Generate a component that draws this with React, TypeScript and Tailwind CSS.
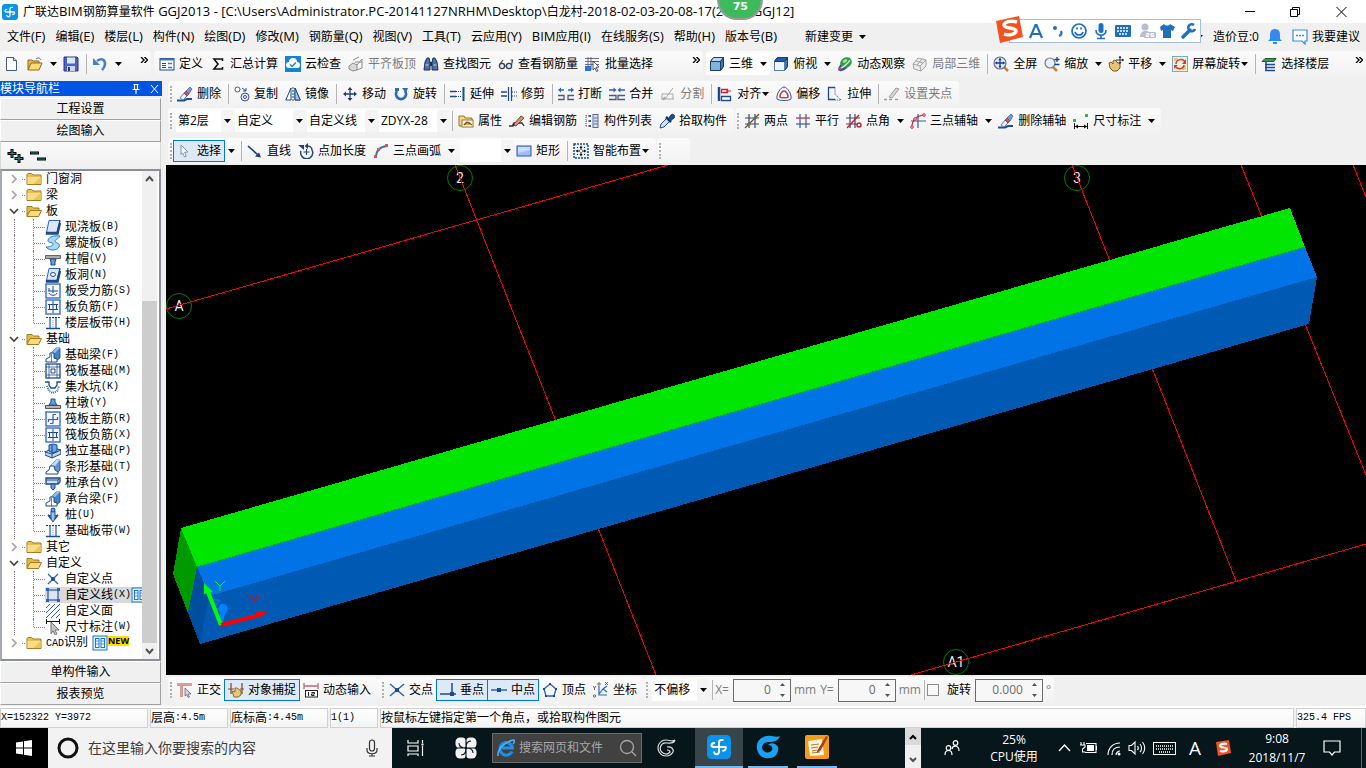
import type { ReactNode } from 'react'

const N = '#1c4a8a'
const B = '#2a62c4'
const R = '#c8202c'

const eraser = (
  <>
    <path d="M0 14.500h7l3-1.500h5" stroke="#1f4f94" strokeWidth="2" fill="none" />
    <path d="M3 12l4-5 3 3-4 4z" fill="#e9edf5" stroke="#6d7f9c" />
    <path d="M7 7l2-2 3 3-2 2z" fill="#d4545a" stroke="#7a2a30" strokeWidth=".6" />
    <path d="M9 5l4-4 2 2-3 5z" fill="#6f9ad8" stroke="#27508f" strokeWidth=".6" />
  </>
)

const cube = (
  <>
    <path d="M1.500 5.500l3-4h10v9l-3 4h-10z" fill="#7fb2dc" stroke="#1d3f66" />
    <path d="M1.500 5.500l3-4h10l-3 4z" fill="#b9daf2" stroke="#1d3f66" />
    <path d="M11.500 5.500l3-4v9l-3 4z" fill="#3d77ab" stroke="#1d3f66" />
  </>
)

const beam = (
  <>
    <path d="M6 6l5-5h4v10l-5 4z" fill="#3f83cc" stroke={N} strokeWidth=".8" />
    <path d="M6 6l5-5h4l-5 5z" fill="#8fbdea" />
    <path d="M1 15v-3l4-2V6h4v5l3 1v3z" fill="#fff" stroke={N} />
    <path d="M6.500 7v8" stroke={N} strokeWidth=".7" />
  </>
)

const grid = <rect x="1" y="1" width="14" height="14" fill="#f4f8ff" stroke={B} strokeWidth="1.300" />

const band = (
  <>
    <path d="M1 2.500h14" stroke={N} strokeDasharray="2 1" />
    <path d="M1 13.500h14" stroke={N} strokeWidth="1.500" />
    <path d="M5 3v10M11 3v10" stroke={B} strokeWidth="1.300" />
    <path d="M8 3v10" stroke="#79a6e8" strokeDasharray="1 1" />
  </>
)

const book = (
  <>
    <rect x="1" y="1" width="14" height="14" fill="#e4f2ff" stroke="#1976d2" />
    <rect x="3.500" y="3.500" width="3.500" height="9" fill="#fff" stroke="#1976d2" />
    <rect x="9" y="3.500" width="3.500" height="9" fill="#fff" stroke="#1976d2" />
    <path d="M4 6h3M4 9h3M9 6h3M9 9h3" stroke="#1976d2" strokeWidth=".8" />
  </>
)

const icons: Record<string, ReactNode> = {
  app: (
    <>
      <rect width="16" height="16" rx="3" fill="#0a93ea" />
      <path
        d="M10.500 3.300H9.500Q8 3.300 8 5v5.800q0 2-1.600 2-1.500 0-1.600-1.300M12.500 8h-8Q3 8 3 6.800q0-1.300 1.800-1.500M12.500 8q.3 2.300-1.800 2.500"
        stroke="#fff"
        strokeWidth="1.300"
        fill="none"
        strokeLinecap="round"
      />
    </>
  ),
  newDoc: (
    <>
      <path d="M2.500 1.500h7l3 3v10h-10z" fill="#fff" stroke="#44597f" />
      <path d="M9.500 1.500v3h3" fill="#cfdcf0" stroke="#44597f" />
    </>
  ),
  open: (
    <>
      <path d="M1 14V4h4l1 1h6v2" fill="#e7b84a" stroke="#8d6a1c" />
      <path d="M1 14l3-7h11l-3 7z" fill="#fbd978" stroke="#8d6a1c" />
      <path d="M9 3c2-2 4-1 5 1" stroke="#3568b0" fill="none" />
    </>
  ),
  save: (
    <>
      <path d="M1 1h13l1 1v13H1z" fill="#4a63c8" stroke="#28387f" />
      <rect x="4" y="1.500" width="8" height="6" fill="#dfe6fa" />
      <rect x="4" y="10" width="8" height="5" fill="#cfd6ea" />
      <rect x="5" y="11" width="2" height="4" fill="#28387f" />
    </>
  ),
  undo: (
    <>
      <path d="M5 5c4-3 8-2 8 3 0 3-1 4-3 6" stroke="#4a7fd0" strokeWidth="2.600" fill="none" />
      <path d="M1 2v7h7z" fill="#4a7fd0" />
    </>
  ),
  define: (
    <>
      <rect x="1" y="2.500" width="14" height="11.500" fill="#fff" stroke={N} />
      <path d="M1 3.500h14" stroke="#3f76c4" strokeWidth="2" />
      <path d="M3 7.500h4M3 9.500h4M3 11.500h4" stroke={N} />
      <path d="M9 7.500h4M9 11.500h4" stroke="#3f76c4" strokeWidth="1.500" />
    </>
  ),
  sigma: <path d="M12.500 5V3H4l4 5-4 5h8.500v-2" stroke="#111" strokeWidth="1.600" fill="none" />,
  cloud: (
    <>
      <rect width="16" height="16" fill="#1583cf" />
      <path d="M4 12a3 3 0 0 1 0-6 4 4 0 0 1 8 0 3 3 0 0 1 0 6z" fill="#fff" />
      <path d="M5 8.500l2 2 4-4" stroke="#1583cf" strokeWidth="1.500" fill="none" />
    </>
  ),
  alignTop: (
    <>
      <path d="M1 10l4-3 4 2v5l-4 1-4-2z" fill="#d8d8d8" stroke="#8a8a8a" />
      <path d="M9 9l5-6v9l-5 2M5 4l6-3M7 6h7" stroke="#8a8a8a" fill="none" />
    </>
  ),
  find: (
    <>
      <path d="M2 6l2-4h2l1 4v8H1zM9 6l1-4h2l2 4 1 8H9z" fill="#4d6ea8" stroke="#1b3157" />
      <path d="M7 6h2v4H7z" fill="#1b3157" />
      <path d="M2.500 9h3M10.500 9h3" stroke="#c9d8f2" />
    </>
  ),
  glasses: (
    <>
      <circle cx="4" cy="10" r="2.600" fill="#e4edf2" stroke="#33434d" strokeWidth="1.300" />
      <circle cx="11" cy="10" r="2.600" fill="#e4edf2" stroke="#33434d" strokeWidth="1.300" />
      <path d="M6.500 10h2M13.500 9l1-5h-2M2 8l3-4" stroke="#33434d" strokeWidth="1.200" fill="none" />
    </>
  ),
  batch: (
    <>
      <path d="M0 2.500h14M0 5.500h14M0 8.500h14M3 1v13M6 1v13" stroke="#5d5d7a" strokeWidth=".9" />
      <rect y="10" width="6" height="5" fill="#2f6fd6" />
      <path d="M8 5l6 6-3 .3 2 3.500-1.500.7-1.500-3.500-2 2z" fill="#fff" stroke="#333" strokeWidth=".8" />
    </>
  ),
  cube,
  topView: (
    <>
      {cube}
      <path d="M1.500 5.500h10v9h-10z" fill="#eef5fb" stroke="#5c7fa3" />
      <path d="M1.500 5.500l3-4h10l-3 4z" fill="#1f5fae" stroke="#1d3f66" />
    </>
  ),
  orbit: (
    <>
      <ellipse cx="7" cy="10" rx="7" ry="3.500" transform="rotate(-40 7 10)" fill="#3156a0" />
      <ellipse cx="9" cy="6.500" rx="6" ry="5" transform="rotate(-30 9 6.500)" fill="#2f9a45" />
      <path d="M2 13C5 12 11 8 13 4" stroke="#e3ecdc" fill="none" strokeWidth="1.300" />
      <ellipse cx="8" cy="5" rx="2.500" ry="1.500" transform="rotate(-30 8 5)" fill="#9be29a" />
      <circle cx="3" cy="13" r="1.500" fill="#c24a3a" />
    </>
  ),
  part3d: (
    <g stroke="#a5a5a5" fill="#ececec">
      <path d="M1 8l5-6 8 2v6l-5 5-7-2z" />
      <path d="M1 8l7 2 6-6M8 10l1 5M4 5l7 2M5 9l5-6" fill="none" />
    </g>
  ),
  full: (
    <>
      <path d="M11 11l4 4" stroke="#b98a3a" strokeWidth="2.500" />
      <circle cx="7" cy="7" r="6" fill="#dbe9fa" stroke="#6a6f8f" strokeWidth="1.200" />
      <path d="M7 3v8M3 7h8" stroke="#173f8c" strokeWidth="1.300" />
      <path d="M7 1.500L5.500 4h3zM7 12.500L5.500 10h3zM1.500 7L4 5.500v3zM12.500 7L10 5.500v3z" fill="#173f8c" />
    </>
  ),
  zoom: (
    <>
      <path d="M9 11l4 4" stroke="#b98a3a" strokeWidth="2.500" />
      <circle cx="6" cy="7" r="5" fill="#e6f0fb" stroke="#777b8f" strokeWidth="1.200" />
      <path d="M10.500 3.500h5M13 1v5M10.500 8.500h5" stroke="#1c3f80" strokeWidth="1.300" />
    </>
  ),
  pan: (
    <>
      <path d="M1 7l2-1 2 2V5l2-1 2 2 1 1 2 1v4l-3 3H5L2 12z" fill="#e8c376" stroke="#7c5d22" />
      <path d="M12 0v8M8 4h8" stroke="#333" />
      <path d="M12 0l-1.500 2h3zM16 4l-2-1.500v3zM12 8l-1.500-2h3z" fill="#333" />
    </>
  ),
  screenRotate: (
    <>
      <rect x=".5" y=".5" width="15" height="15" fill="#e6f4dd" stroke="#74aacb" />
      <path d="M2 2h4v3H2zM10 10h4v4h-4z" fill="#f2c766" />
      <path d="M4 8c0-5 7-6 9-2M12 9c0 4-6 5-8 2" stroke="#e0363b" strokeWidth="1.500" fill="none" />
      <path d="M14 3v5h-4zM2 13V9h4z" fill="#e0363b" />
    </>
  ),
  floors: (
    <>
      <path d="M1 5.500l3-3h11l-2 3z" fill="#3f9a52" stroke="#1c5f2e" />
      <path d="M4 8.500h10M4 11.500h10M4 14.500h10M5 6v9" stroke="#1f4a8c" strokeWidth="1.500" />
    </>
  ),
  eraser,
  copy: (
    <>
      <circle cx="3.500" cy="3.500" r="2.500" fill="#fff" stroke="#44557a" />
      <circle cx="11" cy="11" r="4" fill="#e4eaf5" stroke="#44557a" />
      <circle cx="11" cy="11" r="1.500" fill="#fff" stroke="#44557a" />
      <path d="M8 2l4 3M12 2v3H9" stroke="#25519c" fill="none" />
    </>
  ),
  mirror: (
    <>
      <path d="M6 2v12H.8zM10 2v12h5.200z" fill="#fff" stroke={N} />
      <path d="M8 1v14" stroke={N} strokeDasharray="2 1" />
      <path d="M10 2v12h5.200z" fill="#a5c3ea" stroke={N} />
    </>
  ),
  move: (
    <>
      <path d="M8 2v12M2 8h12" stroke="#1c3f73" strokeWidth="1.300" />
      <path d="M8 1L5.500 4h5zM8 15l-2.500-3h5zM1 8l3-2.500v5zM15 8l-3-2.500v5z" fill="#1c3f73" />
    </>
  ),
  rotate: (
    <>
      <path d="M4 5a5 5 0 1 0 8 0" stroke="#2f6ab8" strokeWidth="2.800" fill="none" />
      <path d="M9 2h6l-2 5z" fill="#2f6ab8" />
      <path d="M2 2h4v3H2z" fill="#2f6ab8" />
    </>
  ),
  extend: (
    <>
      <path d="M0 5.500h6M0 10.500h6" stroke={N} strokeWidth="1.300" />
      <path d="M6 5.500h6M6 10.500h6" stroke={N} strokeDasharray="1 1" />
      <path d="M13.500 1v14" stroke={N} strokeWidth="2" />
    </>
  ),
  trim: (
    <>
      <path d="M0 6h6M0 10h6" stroke={N} strokeWidth="1.500" />
      <path d="M7.500 1v14M10.500 1v14" stroke={N} strokeWidth="1.200" />
      <path d="M11 6h5M11 10h5" stroke={N} strokeDasharray="1 1" />
    </>
  ),
  split: (
    <>
      <path d="M0 9.500h6v4H0M16 9.500h-6v4h6" fill="none" stroke="#4a5a73" strokeWidth="1.300" />
      <path d="M1 4h5M10 4h5" stroke={B} strokeWidth="1.500" />
      <path d="M0 4l3-2.500v5zM16 4l-3-2.500v5z" fill={B} />
    </>
  ),
  merge: (
    <>
      <path d="M0 9.500h7v4H0M16 9.500H9v4h7" fill="none" stroke="#4a5a73" strokeWidth="1.300" />
      <path d="M0 4h5M11 4h5" stroke={B} strokeWidth="1.500" />
      <path d="M7.500 4l-3-2.500v5zM8.500 4l3-2.500v5z" fill={B} />
    </>
  ),
  divide: (
    <g stroke="#a9a9a9" fill="none">
      <path d="M1 13h13M2 8h11v5M5 13l8-11M2 8v5" />
      <path d="M3 14l2-3" strokeWidth="2" />
    </g>
  ),
  align: (
    <>
      <path d="M2 1v14" stroke={N} strokeWidth="2.500" />
      <path d="M4.500 3.500h6v3h-6z" fill="#fff" stroke={R} strokeWidth="1.300" />
      <path d="M4.500 10.500h9v4h-9z" fill="#fff" stroke={N} strokeWidth="1.300" />
      <path d="M14 5H9" stroke={R} />
    </>
  ),
  offset: (
    <>
      <path d="M1 13C0 8 5 1 8 1s8 7 7 12c-2 2-12 2-14 0z" fill="#eef3fb" stroke="#355a99" />
      <path d="M4 11c0-3 2-6 4-6s4 3 4 6c-1 1-7 1-8 0z" fill="#fff" stroke="#cf3b3b" strokeWidth="1.600" />
    </>
  ),
  stretch: (
    <>
      <path d="M8 1.500H1.500v12H8" fill="none" stroke={N} strokeWidth="1.300" />
      <path d="M8 1.500v7l6 5.500H8" fill="none" stroke={N} strokeDasharray="1 1" />
    </>
  ),
  grip: (
    <g stroke="#a0a0a0" fill="#d5d5d5">
      <path d="M0 13.500h3M5 13.500h3M11 13.500h3" strokeWidth="1.500" />
      <path d="M5 11l7-9 3 1-7 9z" />
    </g>
  ),
  props: (
    <>
      <path d="M1 13V3h5l1 2h7v8z" fill="#f6d88b" stroke="#9a7226" />
      <rect x="4" y="7" width="11" height="7" fill="#fff" stroke="#9a7226" />
      <path d="M5 12l3-3 4 3z" fill="#d9a441" />
      <path d="M6 12l3-3 3 2M10 9l4 3" stroke="#8a4a1a" strokeWidth="1.300" fill="none" />
    </>
  ),
  editBar: (
    <>
      <path d="M0 13h4l1-3h8l2 3" stroke="#333" strokeWidth="1.300" fill="none" />
      <path d="M4 12l8-9 3 2-8 8z" fill="#d98f6a" stroke="#5a3520" strokeWidth=".8" />
      <path d="M3 13l1-3 2 2z" fill="#222" />
    </>
  ),
  list: (
    <>
      <path d="M2 2v12M2 3h3M2 8h3M2 13h3" stroke="#555" strokeDasharray="1 1" />
      <path d="M5 3h2M5 8h2M5 13h2" stroke={B} strokeWidth="2" />
      <rect x="9" y="1.500" width="5" height="13" fill="#d6e2f5" stroke="#5c6d8c" />
      <path d="M10 5h4M10 8h4M10 11h4" stroke="#5c6d8c" />
    </>
  ),
  dropper: (
    <>
      <path d="M1 15l1-4 6-6 3 3-6 6z" fill="#cfe3fa" stroke="#24508e" />
      <path d="M7 4l5 5" stroke="#153766" strokeWidth="2.500" />
      <path d="M9 6l3-4a2 2 0 0 1 3 3l-4 3z" fill="#1e4f98" stroke="#153766" />
    </>
  ),
  twoPt: (
    <>
      <path d="M5 1v14M11 1v14M1 5h14M1 11h14" stroke="#3e4668" strokeWidth="1.200" />
      <path d="M1 15L15 1" stroke="#a2362c" strokeWidth="1.300" />
      <circle cx="5" cy="11" r="1.600" fill="#2d8a35" />
      <circle cx="11" cy="5" r="1.600" fill="#2d8a35" />
    </>
  ),
  parallel: (
    <>
      <path d="M5 1v14M11 1v14" stroke="#3e5a90" strokeWidth="1.200" />
      <path d="M1 5h14" stroke="#c42f4c" strokeWidth="1.300" />
      <path d="M1 11h14" stroke="#3e5a90" strokeWidth="1.200" />
    </>
  ),
  ptAngle: (
    <>
      <path d="M4 1v14M9 1v14M0 5h14M0 11h12" stroke="#3e4668" strokeWidth="1.200" />
      <path d="M1 15L13 2" stroke={R} strokeWidth="1.400" />
      <circle cx="13" cy="12" r="2" fill="#fff" stroke={R} strokeWidth="1.400" />
    </>
  ),
  threePt: (
    <>
      <path d="M8 1v14M1 8h15" stroke="#3e5a90" strokeWidth="1.200" />
      <path d="M2 14C2 7 6 3 14 2" stroke={R} strokeWidth="1.200" fill="none" />
      <circle cx="2" cy="14" r="1.300" fill="#fff" stroke={R} />
      <circle cx="5" cy="6" r="1.300" fill="#fff" stroke={R} />
      <circle cx="14" cy="2" r="1.300" fill="#fff" stroke={R} />
    </>
  ),
  dim: (
    <>
      <path d="M1.500 10v6M14.500 10v6M2 13.500h12" stroke="#111" />
      <path d="M2 13.500l3-2v4zM14 13.500l-3-2v4z" fill="#111" />
      <rect x="0" y="6" width="3" height="3" fill="#3fae4e" />
      <rect x="12" y="1" width="3" height="3" fill="#3fae4e" />
    </>
  ),
  cursor: <path d="M4 2l7 7-3.500.3 1.800 4-1.800.7-1.800-4.200L4 11.500z" fill="#fff" stroke="#8094b5" />,
  line: (
    <>
      <path d="M1 3l10 9" stroke="#1c3f73" strokeWidth="1.600" />
      <path d="M14 14.500l-6-1 4-4z" fill="#1c3f73" />
    </>
  ),
  ptLen: (
    <>
      <path d="M3 8a6 6 0 1 0 11-1c0-3-3-4-5-4" stroke="#29466e" strokeWidth="1.500" fill="none" />
      <path d="M8.500 6v6M5.500 9h6" stroke="#29466e" strokeWidth="1.200" />
      <path d="M10 0v6L6.500 3zM0 2h6v5z" fill="#29466e" />
    </>
  ),
  arc: (
    <>
      <path d="M3 14C3 8 6 4 14 3" stroke="#3c6dae" strokeWidth="1.800" fill="none" />
      <rect x="1" y="12" width="3" height="3" fill="#d8574a" />
      <rect x="4" y="5" width="3" height="3" fill="#d8574a" />
      <rect x="12" y="1" width="3" height="3" fill="#d8574a" />
    </>
  ),
  rect: (
    <>
      <rect x="1" y="3" width="14" height="10" fill="#9fbdf6" stroke="#2456b8" />
      <path d="M2 4h12v3L2 10z" fill="#cadcff" />
    </>
  ),
  smart: (
    <>
      <rect x="1" y="1" width="14" height="14" fill="#e9f1fb" stroke={N} strokeDasharray="2 1" strokeWidth="1.500" />
      <path d="M8 4v3M8 9v3M4 8h3M9 8h3" stroke="#111" />
      <path d="M8 2.500L6.500 5h3zM8 13.500L6.500 11h3zM2.500 8L5 6.500v3zM13.500 8L11 6.500v3z" fill="#111" />
      <path d="M4 4h1v1H4zM11 4h1v1h-1zM4 11h1v1H4zM11 11h1v1h-1z" fill="#111" />
    </>
  ),
  ortho: (
    <>
      <path d="M0 2.500h15" stroke="#dc9a9a" strokeWidth="3" />
      <path d="M4.500 1v14" stroke="#dc9a9a" strokeWidth="3" />
      <path d="M8 6l6 6-3 0 1.500 3-1.500.5-1.200-3L8 14z" fill="#cdd7e4" stroke="#5f6d82" strokeWidth=".8" />
    </>
  ),
  snap: (
    <>
      <path d="M3 1v11M14 1v11" stroke="#8a4a3a" strokeWidth="1.300" />
      <path d="M0 7h6M12 7h4" stroke="#8a4a3a" />
      <path d="M4 9l3 1V6h2l4 3v4l-3 2H6z" fill="#eac57a" stroke="#8d6a2c" />
    </>
  ),
  dyn: (
    <>
      <path d="M1 1v6M15 1v6M1 4h14" stroke="#b86a72" strokeWidth="1.300" />
      <rect x="2.500" y="8.500" width="12" height="6.500" fill="#fff" stroke="#222" />
      <path d="M5.500 10v4M8.500 10.500h3v1.500h-3v1.500h3" stroke="#222" fill="none" />
    </>
  ),
  cross: (
    <>
      <path d="M1 2l14 12M15 2L1 14" stroke={B} strokeWidth="1.500" />
      <rect x="6" y="6" width="4" height="4" fill={N} />
    </>
  ),
  perp: (
    <>
      <path d="M0 12h16M12 1v11" stroke={N} strokeWidth="1.500" />
      <rect x="10" y="10" width="4" height="4" fill={N} />
    </>
  ),
  mid: (
    <>
      <path d="M0 8h16" stroke={B} strokeWidth="1.500" />
      <rect x="6" y="6" width="4" height="4" fill={N} />
    </>
  ),
  vertex: (
    <>
      <path d="M8 2l6 5-2 7H4L2 7z" fill="none" stroke={B} strokeWidth="1.300" />
      <path d="M7 1h2v2H7zM1 6h2v2H1zM13 6h2v2h-2zM3 13h2v2H3zM11 13h2v2h-2z" fill={N} />
    </>
  ),
  coord: (
    <>
      <path d="M6 4v9h8M6 12l4-5 4 3M14 4l-4 3" stroke={B} fill="none" strokeWidth="1.200" />
      <g fill="none" stroke="#444" strokeWidth=".8">
        <path d="M0 4l1.500 2L3 4M1.500 6v2M12 0l3 3M15 0l-3 3" />
        <circle cx="6" cy="2" r="1.200" />
        <circle cx="1.500" cy="14" r="1.200" />
      </g>
    </>
  ),
  folder: (
    <>
      <path d="M1 13.500V4c0-1 .5-1.500 1.500-1.500h3L7 4h8v9.500z" fill="#e9c050" stroke="#a27b25" />
      <path d="M1.500 6h13v7h-13z" fill="#f9dc86" />
      <path d="M7 13l7-6v6z" fill="#eec456" />
    </>
  ),
  folderOpen: (
    <>
      <path d="M1 13.500V3.500h5L7.500 5H13v3" fill="#e9b844" stroke="#a27b25" />
      <path d="M1 13.500l3-6h11.500l-3 6z" fill="#ffd97a" stroke="#a27b25" />
    </>
  ),
  slab: (
    <>
      <path d="M4 1.500h11l-3 12H1.500z" fill="#dce9fb" stroke={B} />
      <path d="M15 1.500l-3 12H1.500v1.500h11.500L15.500 4" fill="none" stroke={N} strokeWidth="1.300" />
    </>
  ),
  spiral: <path d="M15 1C9 0 4 2 3 5s5 2 5 4-4 3-7 3c3 4 11 4 13 0s-4-4-4-6 3-1 5-5z" fill="#a6d8f7" stroke="#2b7fc0" />,
  cap: (
    <>
      <path d="M.5 4.500h15v3H.5z" fill="#ababab" stroke="#666" />
      <path d="M5 8h6l-1 3v3H6v-3z" fill="#6a9be0" stroke={N} />
    </>
  ),
  hole: (
    <>
      <path d="M4 1.500h11l-3 12H1.500z" fill="#dce9fb" stroke={B} />
      <path d="M15 1.500l-3 12H1.500v1.500h11.500L15.500 4" fill="none" stroke={N} strokeWidth="1.300" />
      <ellipse cx="8" cy="7.500" rx="2.500" ry="2" fill="#fff" stroke={N} />
    </>
  ),
  rebar: (
    <>
      {grid}
      <path d="M3 8h10M8 3v7M4 10c1 3 7 3 8 0M4 5v3" stroke={N} fill="none" />
    </>
  ),
  negRebar: (
    <>
      {grid}
      <path d="M3 5.500h10M3 10.500h10M8 2v12M4.500 5v6M11.500 5v6" stroke={N} fill="none" />
    </>
  ),
  mainRebar: (
    <>
      {grid}
      <path d="M3 8.500h10M8 3.500v9M3.500 8v3M12.500 9V6M8 3.500h3M8 12.500H5" stroke={B} fill="none" strokeWidth="1.200" />
    </>
  ),
  band,
  beam,
  raft: (
    <>
      <rect x="1" y="1" width="14" height="14" fill="#fff" stroke={N} strokeWidth="1.300" />
      <path d="M4 1v14M12 1v14M1 4h14M1 12h14" stroke={N} strokeWidth=".8" />
      <path d="M6 6h4v4H6z" fill="#fff" stroke={N} />
    </>
  ),
  pit: (
    <>
      <path d="M0 3h4v3l2 3h4l2-3V3h4" stroke={N} strokeWidth="1.300" fill="none" />
      <path d="M2 7l2 5 4 2 4-2 2-5" fill="none" stroke={B} strokeDasharray="1 1" strokeWidth="2" />
    </>
  ),
  pier: (
    <>
      <path d="M.5 10.500h15v3H.5z" fill="#b5b5b5" stroke="#555" />
      <path d="M4 10l2-3V4h4v3l2 3z" fill="#6a9be0" stroke={N} />
    </>
  ),
  isolated: (
    <>
      <path d="M0 9l8-4 8 2v4l-9 4-7-3z" fill="#b8d4f0" stroke={N} />
      <path d="M4 8V2l4-1 4 1v6l-4 2z" fill="#6fa3dc" stroke={N} />
      <path d="M7 2v8M0 9l7 2 9-4M7 11v4" stroke={N} fill="none" />
    </>
  ),
  strip: (
    <>
      <path d="M5 7l6-6h4v10l-4 4z" fill="#5f97d6" stroke={N} strokeWidth=".8" />
      <path d="M5 7l6-6h4l-5 6z" fill="#c3dbf3" />
      <path d="M1 15v-2l3-2 1-4h4l1 4 3 2v2z" fill="#fff" stroke={N} />
    </>
  ),
  pileCap: (
    <>
      <path d="M1 3h14v4l-2 2H1z" fill="#cfe1f6" stroke={N} strokeWidth="1.300" />
      <path d="M6 9h4v4l-2 2-2-2z" fill="#6a9be0" stroke={N} />
      <path d="M1 5h12l2-2M13 5v4" stroke={N} fill="none" />
    </>
  ),
  pile: (
    <>
      <path d="M6 4h4v8l-2 3-2-3z" fill="#9ec3ec" stroke={N} />
      <circle cx="8" cy="3" r="2" fill="#6a9be0" stroke={N} />
      <path d="M3 8l3 4M13 8l-3 4M3 8l3 1M13 8l-3 1" stroke={N} strokeWidth="1.300" fill="none" />
    </>
  ),
  customPt: (
    <>
      <path d="M3 3l10 10M13 3L3 13" stroke={B} strokeWidth="1.300" />
      <circle cx="8" cy="8" r="2" fill={N} />
    </>
  ),
  customLine: (
    <>
      <rect x="3" y="3" width="10" height="10" fill="#dfe3ea" stroke={B} strokeWidth="1.300" />
      <path d="M1 1h3v3H1zM12 1h3v3h-3zM1 12h3v3H1zM12 12h3v3h-3z" fill={B} />
    </>
  ),
  customFace: <path d="M1 5l4-4M1 10l9-9M1 15L15 1M6 15l9-9M11 15l4-4" stroke={B} />,
  dimCursor: (
    <>
      <path d="M1.500 0v5M14.500 0v5M1 2.500h14" stroke="#111" />
      <path d="M6 3l8 8-4 0 2 4-2 .8-2-4-2 3z" fill="#c4c4c4" stroke="#777" />
    </>
  ),
  book,
}

function Icon({ name }: { name: string }) {
  return (
    <svg viewBox="0 0 16 16" className="size-4 shrink-0" aria-hidden="true">
      {icons[name]}
    </svg>
  )
}

function Caret() {
  return (
    <svg viewBox="0 0 7 4" className="h-1 w-[7px] shrink-0" aria-hidden="true">
      <path d="M0 0h7L3.500 4z" fill="#000" />
    </svg>
  )
}

// latin runs are set one step larger than the chinese ones
function Mixed({ text }: { text: string }) {
  return (
    <>
      {text.split(/([\x20-\x7e]+)/).map((part, i) => (
        i % 2 ? <span key={i} className="text-[13px]">{part}</span> : part
      ))}
    </>
  )
}

function Tool({ icon, label, active, off, tight }: { icon: string; label?: string; active?: boolean; off?: boolean; tight?: boolean }) {
  return (
    <button
      disabled={off}
      className={`-ml-px flex h-[22px] shrink-0 items-center gap-1 whitespace-nowrap border px-[3px] ${
        active ? 'border-[#0078d7] bg-[#dde9f5]' : 'border-transparent'
      } ${off ? 'text-[#7d7d7d]' : ''}`}
    >
      <Icon name={icon} />
      {label}
      {tight && <span className="-ml-[3px]"><Caret /></span>}
    </button>
  )
}

function More() {
  return (
    <button aria-label="更多" className="flex h-[22px] w-[13px] shrink-0 items-center justify-center">
      <Caret />
    </button>
  )
}

function Overflow() {
  return (
    <button aria-label="其他按钮" className="mb-2 h-3 w-2 shrink-0">
      <svg viewBox="0 0 8 6" className="h-[6px] w-2" fill="none" stroke="#000" strokeWidth="1.400" aria-hidden="true">
        <path d="M1 0l3 3-3 3M4.500 0l3 3-3 3" />
      </svg>
    </button>
  )
}

function Sep() {
  return <span className="ml-[3px] mr-[2px] h-5 w-px shrink-0 bg-[#b4b4b4]" />
}

function Grip() {
  return <span className="ml-[2px] mr-[2px] h-4 w-[2px] shrink-0 border-l-2 border-dotted border-[#b0b0b0]" />
}

function Combo({ value, width, label }: { value: string; width: string; label: string }) {
  return (
    <span className={`relative ml-[2px] block h-[22px] shrink-0 bg-white ${width}`}>
      <select aria-label={label} className="h-full w-full appearance-none pl-[2px] outline-none">
        <option>{value}</option>
      </select>
      <span className="pointer-events-none absolute inset-y-0 right-0 flex w-3 items-center justify-center bg-[#f4f4f4]">
        <Caret />
      </span>
    </span>
  )
}

function Bar({ children, grow }: { children: ReactNode; grow?: boolean }) {
  return (
    <div
      className={`flex h-[26px] shrink-0 items-center rounded-sm bg-linear-to-b from-[#fbfbfb] to-[#f1f1f1] pr-[3px] ${
        grow ? 'flex-1' : ''
      }`}
    >
      {children}
    </div>
  )
}

const menus = ['文件(F)', '编辑(E)', '楼层(L)', '构件(N)', '绘图(D)', '修改(M)', '钢筋量(Q)', '视图(V)', '工具(T)', '云应用(Y)', 'BIM应用(I)', '在线服务(S)', '帮助(H)', '版本号(B)']

type Node = { text: string; k?: string; icon?: string; open?: boolean; depth: 0 | 1; last?: boolean; sel?: boolean }

const tree: Node[] = [
  { text: '门窗洞', depth: 0 },
  { text: '梁', depth: 0 },
  { text: '板', depth: 0, open: true },
  { text: '现浇板', k: '(B)', icon: 'slab', depth: 1 },
  { text: '螺旋板', k: '(B)', icon: 'spiral', depth: 1 },
  { text: '柱帽', k: '(V)', icon: 'cap', depth: 1 },
  { text: '板洞', k: '(N)', icon: 'hole', depth: 1 },
  { text: '板受力筋', k: '(S)', icon: 'rebar', depth: 1 },
  { text: '板负筋', k: '(F)', icon: 'negRebar', depth: 1 },
  { text: '楼层板带', k: '(H)', icon: 'band', depth: 1, last: true },
  { text: '基础', depth: 0, open: true },
  { text: '基础梁', k: '(F)', icon: 'beam', depth: 1 },
  { text: '筏板基础', k: '(M)', icon: 'raft', depth: 1 },
  { text: '集水坑', k: '(K)', icon: 'pit', depth: 1 },
  { text: '柱墩', k: '(Y)', icon: 'pier', depth: 1 },
  { text: '筏板主筋', k: '(R)', icon: 'mainRebar', depth: 1 },
  { text: '筏板负筋', k: '(X)', icon: 'negRebar', depth: 1 },
  { text: '独立基础', k: '(P)', icon: 'isolated', depth: 1 },
  { text: '条形基础', k: '(T)', icon: 'strip', depth: 1 },
  { text: '桩承台', k: '(V)', icon: 'pileCap', depth: 1 },
  { text: '承台梁', k: '(F)', icon: 'beam', depth: 1 },
  { text: '桩', k: '(U)', icon: 'pile', depth: 1 },
  { text: '基础板带', k: '(W)', icon: 'band', depth: 1, last: true },
  { text: '其它', depth: 0 },
  { text: '自定义', depth: 0, open: true },
  { text: '自定义点', icon: 'customPt', depth: 1 },
  { text: '自定义线', k: '(X)', icon: 'customLine', depth: 1, sel: true },
  { text: '自定义面', icon: 'customFace', depth: 1 },
  { text: '尺寸标注', k: '(W)', icon: 'dimCursor', depth: 1, last: true },
]

function Mono({ children }: { children: ReactNode }) {
  return <span className="font-['Liberation_Mono','Noto_Sans_CJK_SC',monospace] text-[10px]">{children}</span>
}

function Chevron({ open }: { open?: boolean }) {
  return (
    <svg viewBox="0 0 10 10" className="mr-[3px] size-[10px] shrink-0" aria-hidden="true">
      <path d={open ? 'M1 3l4 4 4-4' : 'M3 1l4 4-4 4'} fill="none" stroke={open ? '#404040' : '#a0a0a0'} strokeWidth="1.600" />
    </svg>
  )
}

function TreeRow({ n }: { n: Node }) {
  if (n.depth === 0) {
    return (
      <li className="flex h-4 items-center pl-[7px]">
        <Chevron open={n.open} />
        <span className="mr-px w-[3px] border-t border-dotted border-[#808080]" />
        <Icon name={n.open ? 'folderOpen' : 'folder'} />
        <span className="ml-1 whitespace-nowrap">{n.text}</span>
      </li>
    )
  }
  return (
    <li className="flex h-4 items-center pl-3">
      <span className="h-4 w-[19px] shrink-0 border-l border-dotted border-[#808080]" />
      <span className={`w-0 shrink-0 border-l border-dotted border-[#808080] ${n.last ? 'h-2 self-start' : 'h-4'}`} />
      <span className="w-[11px] shrink-0 border-t border-dotted border-[#808080]" />
      <span className={`flex h-4 items-center overflow-hidden whitespace-nowrap ${n.sel ? 'bg-[#d9d9d9]' : ''}`}>
        <Icon name={n.icon!} />
        <span className="ml-1">{n.text}</span>
        {n.k && <Mono>{n.k}</Mono>}
        {n.sel && <Icon name="book" />}
      </span>
    </li>
  )
}

function NavButton({ children }: { children: ReactNode }) {
  return (
    <button className="h-[22px] shrink-0 border border-[#a0a0a0] border-l-white border-t-white bg-[#f0f0f0]">{children}</button>
  )
}

function Sidebar() {
  return (
    <aside className="mt-[3px] flex w-[162px] shrink-0 flex-col pb-px">
      <div className="flex h-[15px] shrink-0 items-center bg-[#0054e3] text-white">
        <span className="flex-1">模块导航栏</span>
        <svg viewBox="0 0 28 12" className="mr-[3px] h-3 w-7" aria-hidden="true">
          <path d="M2.500 1.500h5M3.500 1.500v5M6.500 1.500v5M1.500 6.500h7M5 7v4" stroke="#fff" strokeWidth="1.200" />
          <path d="M20 2l7 8M27 2l-7 8" stroke="#fff" />
        </svg>
      </div>
      <div className="flex min-h-0 flex-1 flex-col pr-px pt-[2px]">
        <NavButton>工程设置</NavButton>
        <NavButton>绘图输入</NavButton>
        <div className="flex h-[27px] shrink-0 items-center border-x border-[#d8d8d8] bg-linear-to-b from-[#fafafa] to-[#efefef] pl-[6px]">
          <svg viewBox="0 0 42 16" className="h-4 w-[42px]" aria-hidden="true">
            <path d="M5 1v9M.5 5.500h9M12 6v9M7.500 10.500h9M23 5h9M30 11h9" stroke="#000" strokeWidth="3" />
            <path d="M5 2v7M1.500 5.500h7M12 7v7M8.500 10.500h7M24 5h7M31 11h7" stroke="#1d8a7c" strokeWidth="1.200" />
          </svg>
        </div>
        <div className="flex min-h-0 flex-1 border-2 border-[#8a8f99] border-l-[#a5a9b0] bg-white pr-[2px]">
          <ul className="min-w-0 flex-1 overflow-hidden">
            {tree.map((n, i) => (
              <TreeRow key={i} n={n} />
            ))}
            <li className="flex h-4 items-center pl-[7px]">
              <Chevron />
              <span className="mr-px w-[3px] border-t border-dotted border-[#808080]" />
              <Icon name="folder" />
              <span className="ml-1 mr-1 whitespace-nowrap"><Mono>CAD</Mono>识别</span>
              <Icon name="book" />
              <span className="mb-1 bg-[#ffe000] text-[9px] font-bold leading-[10px]">NEW</span>
            </li>
          </ul>
          <div className="flex w-[15px] shrink-0 flex-col items-center bg-[#f0f0f0]">
            <svg viewBox="0 0 15 16" className="h-4 w-[15px]" aria-hidden="true">
              <path d="M4 10l3.500-4 3.500 4" fill="none" stroke="#505050" strokeWidth="2" />
            </svg>
            <div className="flex-[113]" />
            <div className="w-full flex-[340] bg-[#cdcdcd]" />
            <svg viewBox="0 0 15 16" className="h-4 w-[15px]" aria-hidden="true">
              <path d="M4 6l3.500 4L11 6" fill="none" stroke="#505050" strokeWidth="2" />
            </svg>
          </div>
        </div>
        <NavButton>单构件输入</NavButton>
        <NavButton>报表预览</NavButton>
      </div>
    </aside>
  )
}

function Axis({ x, y, t }: { x: number; y: number; t: string }) {
  return (
    <>
      <circle cx={x} cy={y} r="12.500" fill="none" stroke="#008000" />
      <text x={x} y={y + 5} textAnchor="middle" fill="#e8e8e8" fontSize="14">{t}</text>
    </>
  )
}

function Viewport() {
  return (
    <div className="relative min-h-0 flex-1 bg-black">
      <svg viewBox="166 165 1200 510" preserveAspectRatio="xMinYMin slice" className="absolute inset-0 h-full w-full font-['Roboto',sans-serif]" role="img" aria-label="三维视图">
        <Axis x={460} y={178} t="2" />
        <Axis x={1077} y={178} t="3" />
        <Axis x={179} y={306} t="A" />
        <Axis x={956} y={662} t="A1" />
        <path
          d="M166 309L668 165M455 165L656 675M1072 165L1236 581M1241 165L1366 475M1353 165L1366 197M911 675L1366 544"
          stroke="#f00"
          fill="none"
          shapeRendering="crispEdges"
        />
        <g shapeRendering="crispEdges">
          <path d="M181 528L1290 208L1305 247L197 567z" fill="#00e600" />
          <path d="M181 528L197 567L188 613L173 574z" fill="#009a00" />
          <path d="M197 567L1305 247L1317 277L210 597z" fill="#0073e6" />
          <path d="M197 567L210 597L200 644L188 613z" fill="#004f9e" />
          <path d="M209 596L1317 277L1309 324L200 644z" fill="#005ab3" />
          <path d="M197 567L1305 247" stroke="#00a844" />
        </g>
        <path d="M219 625l4-2 2-9c4-3 3-11-2-10-5 0-5 6-3 9z" fill="#0080ff" />
        <path d="M212 600h8l-7 9h8" stroke="#0080ff" fill="none" />
        <path d="M221 625L208 592" stroke="#0f0" strokeWidth="4" />
        <path d="M204 583l9 9-9 2z" fill="#0f0" />
        <path d="M215 581l5 5 5-5M220 586v5" stroke="#0f0" fill="none" />
        <path d="M221 625l39-10" stroke="#f00" strokeWidth="4" />
        <path d="M268 612l-12-1 2 7z" fill="#f00" />
        <path d="M250 596l9 8M259 596l-9 8" stroke="#f00" />
      </svg>
    </div>
  )
}

function NumberBox({ label, value, width }: { label: string; value: string; width: string }) {
  return (
    <span className={`flex h-[23px] shrink-0 items-center border border-[#6a6a6a] bg-[#f7f7f7] pr-1 ${width}`}>
      <input aria-label={label} defaultValue={value} className="min-w-0 flex-1 bg-transparent pr-2 text-right text-[#6d6d6d] outline-none" />
      <svg viewBox="0 0 7 16" className="h-4 w-[7px]" aria-hidden="true">
        <path d="M1 4h5L3.500 1zM1 12h5l-2.500 3z" fill="#555" />
      </svg>
    </span>
  )
}

function BottomTools() {
  return (
    <div className="flex h-[31px] shrink-0 items-center overflow-hidden bg-[#f0f0f0] pb-px pl-[2px]">
      <Bar>
        <Grip />
        <Tool icon="ortho" label="正交" />
        <Tool icon="snap" label="对象捕捉" active />
        <Tool icon="dyn" label="动态输入" />
      </Bar>
      <Bar>
        <span className="w-[2px]" />
        <Grip />
        <Tool icon="cross" label="交点" />
        <Tool icon="perp" label="垂点" active />
        <Tool icon="mid" label="中点" active />
        <Tool icon="vertex" label="顶点" />
        <Tool icon="coord" label="坐标" />
      </Bar>
      <Bar>
        <Grip />
        <Combo value="不偏移" width="w-[57px]" label="偏移方式" />
        <Sep />
        <span className="mr-1 text-[#7d7d7d]">X=</span>
        <NumberBox label="X" value="0" width="w-[58px]" />
        <span className="ml-[3px] mr-1 text-[#7d7d7d]">mm</span>
        <span className="mr-1 text-[#7d7d7d]">Y=</span>
        <NumberBox label="Y" value="0" width="w-[58px]" />
        <span className="ml-[3px] text-[#7d7d7d]">mm</span>
        <Sep />
        <label className="mr-1 flex items-center gap-2">
          <input type="checkbox" className="size-3 appearance-none border border-[#8c8c8c] bg-[#f7f7f7]" />
          旋转
        </label>
        <NumberBox label="角度" value="0.000" width="w-[68px]" />
        <span className="ml-[3px] text-[#7d7d7d]">°</span>
      </Bar>
    </div>
  )
}

function Toolbars() {
  return (
    <div className="shrink-0 overflow-hidden pb-px pl-[2px] pt-[2px]">
      <div className="flex h-7 items-center">
        <Bar>
          <Grip />
          <Tool icon="eraser" label="删除" />
          <Sep />
          <Tool icon="copy" label="复制" />
          <Tool icon="mirror" label="镜像" />
          <Sep />
          <Tool icon="move" label="移动" />
          <Tool icon="rotate" label="旋转" />
          <Sep />
          <Tool icon="extend" label="延伸" />
          <Tool icon="trim" label="修剪" />
          <Sep />
          <Tool icon="split" label="打断" />
          <Tool icon="merge" label="合并" />
          <Tool icon="divide" label="分割" off />
          <Sep />
          <Tool icon="align" label="对齐" tight />
          <Tool icon="offset" label="偏移" />
          <Tool icon="stretch" label="拉伸" />
          <Sep />
          <Tool icon="grip" label="设置夹点" off />
        </Bar>
      </div>
      <div className="flex h-[26px] items-center gap-px">
        <Bar>
          <Grip />
          <Combo value="第2层" width="w-[57px]" label="楼层" />
          <Combo value="自定义" width="w-[70px]" label="构件类型" />
          <Combo value="自定义线" width="w-[70px]" label="构件" />
          <Combo value="ZDYX-28" width="w-[70px]" label="名称" />
          <Sep />
          <Tool icon="props" label="属性" />
          <Tool icon="editBar" label="编辑钢筋" />
          <Tool icon="list" label="构件列表" />
          <Tool icon="dropper" label="拾取构件" />
        </Bar>
        <Bar>
          <Grip />
          <Tool icon="twoPt" label="两点" />
          <Tool icon="parallel" label="平行" />
          <Tool icon="ptAngle" label="点角" />
          <More />
          <Tool icon="threePt" label="三点辅轴" />
          <More />
          <Tool icon="eraser" label="删除辅轴" />
          <Tool icon="dim" label="尺寸标注" />
          <More />
        </Bar>
      </div>
      <div className="flex h-[30px] items-center gap-px pt-[3px]">
        <Bar>
          <Grip />
          <Tool icon="cursor" label="选择" active />
          <More />
          <Sep />
          <Tool icon="line" label="直线" />
          <Tool icon="ptLen" label="点加长度" />
          <Tool icon="arc" label="三点画弧" />
          <More />
          <Combo value="" width="w-[53px]" label="画弧方式" />
          <Tool icon="rect" label="矩形" />
          <Sep />
          <Tool icon="smart" label="智能布置" tight />
        </Bar>
        <Bar>
          <Grip />
          <span className="w-6" />
        </Bar>
      </div>
    </div>
  )
}

function SogouBar() {
  return (
    <div className="absolute right-[165px] top-4 h-[27px] w-[206px]">
      <svg viewBox="0 0 206 27" className="h-[27px] w-[206px]" role="img" aria-label="输入法">
        <rect x="14.500" y="3.500" width="191" height="23" fill="#fff" stroke="#a9bfd8" />
        <path d="M1 5L24 0l4 21-23 6z" fill="#f4511e" />
        <path d="M22 6c-6-2-13 0-13 3 0 4 12 2 12 6 0 3-7 5-12 3" stroke="#fff" strokeWidth="3.500" fill="none" />
        <path d="M35 22l5.500-13h1L47 22M37 18h8" stroke="#1f6fc0" strokeWidth="2.200" fill="none" />
        <circle cx="60" cy="12" r="2" fill="#1f6fc0" />
        <path d="M66 15c1 2 0 4-2 5" stroke="#1f6fc0" strokeWidth="2.200" fill="none" />
        <g fill="none" stroke="#1f6fc0" strokeWidth="1.700">
          <circle cx="84" cy="15" r="7" />
          <path d="M80 16c1 4 7 4 8 0M82 11.500v2M86 11.500v2" />
          <path d="M101 14c0 7 10 7 10 0M106 19v3M102 22.500h8" />
        </g>
        <rect x="103.500" y="7" width="5" height="10" rx="2.500" fill="#1f6fc0" />
        <rect x="120" y="9" width="16" height="12" rx="1" fill="#1f6fc0" />
        <path d="M122 12h12M122 15h12M124 18h8" stroke="#fff" strokeWidth="1.300" strokeDasharray="2 1" />
        <g fill="#b4bfd3">
          <circle cx="150" cy="11" r="3.500" />
          <path d="M145 21c0-8 10-8 10-2v2z" />
          <rect x="149" y="16" width="12" height="6" rx="1" />
        </g>
        <path d="M151 17.500h3v1.500h-3v1.500h3M159 17.500h-3v3h3v-1.500h-3" stroke="#fff" fill="none" />
        <path d="M165 11l4-3c1 2 5 2 6 0l5 3-2 4-2-1v8h-8v-8l-2 1z" fill="#1f6fc0" />
        <path d="M188 21l7-7" stroke="#1f6fc0" strokeWidth="3.500" strokeLinecap="round" />
        <path d="M199 9a3.500 3.500 0 1 0 1 4" stroke="#1f6fc0" strokeWidth="2.600" fill="none" />
      </svg>
    </div>
  )
}

function StatusCell({ children, width }: { children: ReactNode; width: string }) {
  return <div className={`flex items-center overflow-hidden whitespace-pre border border-[#d0d0d0] bg-linear-to-b from-white to-[#f3f3f3] ${width}`}>{children}</div>
}

function Taskbar() {
  return (
    <footer className="flex h-10 shrink-0 items-stretch bg-[#06161b] text-white">
      <button aria-label="开始" className="flex w-12 shrink-0 items-center justify-center bg-black">
        <svg viewBox="0 0 16 16" className="size-4" fill="#fff">
          <path d="M0 2.500l7-1v6H0zM8 1.300L16 0v7.500H8zM0 8.500h7v6l-7-1zM8 8.500h8V16l-8-1.300z" />
        </svg>
      </button>
      <label className="flex w-[344px] shrink-0 items-center bg-[#f2f2f2] pl-[9px] pr-3">
        <svg viewBox="0 0 22 22" className="mr-[9px] size-[22px]" aria-hidden="true">
          <circle cx="11" cy="11" r="9" fill="none" stroke="#111" strokeWidth="3" />
        </svg>
        <input placeholder="在这里输入你要搜索的内容" className="min-w-0 flex-1 bg-transparent text-sm outline-none placeholder:text-[#3c3c3c]" />
        <svg viewBox="0 0 16 18" className="h-[18px] w-4" fill="none" stroke="#333" strokeWidth="1.200" aria-hidden="true">
          <rect x="5.500" y="1" width="5" height="11" rx="2.500" />
          <path d="M3 9v2c0 5 10 5 10 0V9M8 14.500V17M5 17h6" />
        </svg>
      </label>
      <div className="flex w-[100px] shrink-0 items-center gap-[30px] pl-[15px]">
        <svg viewBox="0 0 18 16" className="h-4 w-[18px]" fill="none" stroke="#fff" strokeWidth="1.200" aria-hidden="true">
          <path d="M1 0v3h10V0M1 6h10v5H1zM1 16v-2h10v2M15.500 0v3M15.500 6v10" />
          <path d="M14.500 4.500h2" strokeWidth="2" />
        </svg>
        <svg viewBox="0 0 22 22" className="size-[22px]" aria-hidden="true">
          <g fill="#f2f2f2">
            <rect x=".5" y=".5" width="11" height="11" rx="4.500" />
            <rect x="10.500" y=".5" width="11" height="11" rx="4.500" />
            <rect x=".5" y="10.500" width="11" height="11" rx="4.500" />
            <rect x="10.500" y="10.500" width="11" height="11" rx="4.500" />
          </g>
          <path d="M11 11C11 7 12 4 16 4M11 11c4 0 7 1 7 5M11 11c0 4-1 7-5 7M11 11c-4 0-7-1-7-5M11 11V0M11 11h11M11 11v11M11 11H0" stroke="#06161b" strokeWidth="1.100" fill="none" />
        </svg>
      </div>
      <label className="my-[5px] flex w-[150px] shrink-0 items-center border border-[#6b6b6b] bg-[#414141] px-1">
        <svg viewBox="0 0 18 18" className="mr-1 size-[18px] shrink-0" aria-hidden="true">
          <path d="M15 12.500A6.300 6.300 0 1 1 15.500 9H5" fill="none" stroke="#1e90e8" strokeWidth="3" />
          <path d="M1 17C0 11 8 2 17 1c1 1 0 3-1 4" fill="none" stroke="#4fb3f5" strokeWidth="1.500" />
        </svg>
        <input placeholder="搜索网页和文件" className="min-w-0 flex-1 bg-transparent text-xs outline-none placeholder:text-[#a8a8a8]" />
        <svg viewBox="0 0 18 18" className="size-[18px]" fill="none" stroke="#a8a8a8" strokeWidth="1.300" aria-hidden="true">
          <circle cx="8" cy="8" r="6.500" />
          <path d="M13 13l4 4" />
        </svg>
      </label>
      <div className="flex w-[53px] shrink-0 items-center pl-[14px]">
        <svg viewBox="0 0 20 20" className="size-5" fill="none" stroke="#ddd" strokeWidth="1.200" aria-hidden="true">
          <path d="M19 2c-3 2-5 0-9 0a8 8 0 1 0 7 12c1-3-2-6-6-5M19 2c-1 4-5 3-8 3a5.500 5.500 0 1 0 3 9c0-1-1-2-3-2" />
        </svg>
      </div>
      <button aria-label="广联达" className="flex w-12 shrink-0 items-center justify-center border-b-2 border-[#76b9ed] bg-[#37454b]">
        <svg viewBox="0 0 16 16" className="size-6">{icons.app}</svg>
      </button>
      <button aria-label="浏览器" className="ml-[5px] flex w-10 shrink-0 items-center justify-center border-b-2 border-[#76b9ed]">
        <svg viewBox="0 0 24 24" className="size-6">
          <path d="M24 1c-4 2-8-1-13 0C4 2 0 7 1 14c1 6 6 10 12 9 7 0 10-6 9-11-2-4-7-5-10-2 4 0 5 3 4 5-2 4-9 3-10-2 0-4 3-6 7-6 5 0 9-1 11-6z" fill="#1aa0f5" />
        </svg>
      </button>
      <button aria-label="便笺" className="ml-[9px] flex w-10 shrink-0 items-center justify-center border-b-2 border-[#76b9ed]">
        <svg viewBox="0 0 24 24" className="size-6">
          <rect width="24" height="24" rx="2" fill="#f59a1a" />
          <path d="M3 6l14-2 2 16-14 1z" fill="#fff6df" />
          <path d="M6 10l8-1M6 13l7-1M7 16l5-1M7 18l8-1" stroke="#b27b2a" />
          <path d="M12 16L21 1l2 1-7 13-4 3z" fill="#a8421d" />
        </svg>
      </button>
      <div className="flex-1" />
      <div className="mr-4 flex w-4 shrink-0 flex-col bg-[#f0f0f0]">
        <svg viewBox="0 0 16 40" className="h-10 w-4" aria-hidden="true">
          <path d="M0 0h16v17H0z" fill="#dadada" />
          <path d="M5 11l3-3 3 3" stroke="#000" strokeWidth="2" fill="none" />
          <path d="M5 30l3 3 3-3" stroke="#505050" strokeWidth="2" fill="none" />
        </svg>
      </div>
      <div className="flex shrink-0 items-center">
        <svg viewBox="0 0 16 16" className="ml-[7px] size-4" fill="none" stroke="#fff" strokeWidth="1.200" aria-hidden="true">
          <circle cx="4.500" cy="8" r="2.300" />
          <path d="M1 15c0-6 7-6 7 0" />
          <circle cx="11.500" cy="3" r="2.300" />
          <path d="M8 9c1-4 7-4 7 2" />
        </svg>
        <div className="w-[108px] text-center text-xs leading-[17px]">
          <p>25%</p>
          <p>CPU使用</p>
        </div>
        <svg viewBox="0 0 127 20" className="-ml-[10px] h-5 w-[127px]" fill="none" stroke="#fff" aria-hidden="true">
          <path d="M1 13l5.500-6 5.500 6" strokeWidth="1.300" />
          <path d="M23 4v3M26 4v3M22 7h5v2l-2.500 2v3h3" strokeWidth="1.100" />
          <rect x="29.500" y="7.500" width="6" height="5" fill="#fff" />
          <path d="M28 5.500h10v9H27M38.500 8v4" strokeWidth="1.100" />
          <path d="M50 17c0-7 5-12 12-12M54 17c0-5 3-8 8-8M58 17c0-2 2-4 4-4" strokeWidth="1.200" />
          <circle cx="61" cy="16" r="1.500" fill="#fff" stroke="none" />
          <path d="M71 7.500h2.500L77 4v12l-3.500-3.500H71z" strokeWidth="1.100" />
          <path d="M79.500 8c1 1.500 1 3 0 4M82 6c2 2.500 2 6 0 8M84.500 4c3 4 3 8 0 12" strokeWidth="1.100" />
          <rect x="95.500" y="4.500" width="22" height="12" />
          <path d="M98 8h18M98 11h18M101 14h11" strokeWidth="1.300" strokeDasharray="1 1" />
        </svg>
        <span className="w-5 text-center text-[19px] leading-5">A</span>
        <svg viewBox="0 0 16 16" className="ml-[10px] size-4" aria-hidden="true">
          <path d="M1 2l13-2 2 13-13 3z" fill="#f4511e" />
          <path d="M12 4c-3-1-7 0-7 2s7 1 7 3-4 3-7 2" stroke="#fff" strokeWidth="2.200" fill="none" />
        </svg>
        <div className="w-[92px] text-center text-xs leading-[19px]">
          <p>9:08</p>
          <p>2018/11/7</p>
        </div>
        <svg viewBox="0 0 18 18" className="mr-5 size-[18px]" fill="none" stroke="#fff" strokeWidth="1.200" aria-hidden="true">
          <path d="M1 2h16v11h-5.500L9 16l-2.500-3H1z" />
        </svg>
        <span className="mr-1 h-10 w-px bg-[#5a666a]" />
      </div>
    </footer>
  )
}

export default function App() {
  return (
    <div className="relative flex h-screen flex-col overflow-hidden bg-[#f0f0f0] font-['Open_Sans','Noto_Sans_CJK_SC',sans-serif] text-xs leading-4 text-black">
      <header className="flex h-[23px] shrink-0 items-center bg-white pl-[2px]">
        <Icon name="app" />
        <h1 className="ml-[5px] flex-1 whitespace-nowrap">
          <Mixed text="广联达BIM钢筋算量软件 GGJ2013 - [C:\Users\Administrator.PC-20141127NRHM\Desktop\白龙村-2018-02-03-20-08-17(2666).GGJ12]" />
        </h1>
        <svg viewBox="0 0 110 12" className="mr-[18px] h-3 w-[110px]" fill="none" stroke="#000" aria-hidden="true">
          <path d="M7 5.500h10" />
          <path d="M52.500 3.500h7v7h-7zM54.500 3.500v-2h7v7h-2" />
          <path d="M98.500 1l10 10M108.500 1l-10 10" />
        </svg>
      </header>
      <div className="absolute left-[54.200%] top-0 flex h-5 w-[46px] -translate-x-1/2 items-start justify-center rounded-b-full border-2 border-t-0 border-[#9a9a9a] bg-[#3dbb5a] font-['DejaVu_Sans',sans-serif] text-[11px] font-bold leading-[14px] text-white">
        75
      </div>

      <nav className="flex h-[27px] shrink-0 items-center gap-[10px] whitespace-nowrap pl-[7px] pr-[6px]">
        {menus.map(m => (
          <button key={m}><Mixed text={m} /></button>
        ))}
        <button className="ml-[18px] flex items-center gap-[6px]">
          新建变更
          <Caret />
        </button>
        <span className="flex-1" />
        <Caret />
        <span>造价豆:0</span>
        <svg viewBox="0 0 14 16" className="-ml-px h-4 w-[14px]" aria-hidden="true">
          <path d="M7 0c4 0 5 3 5 6v4l2 2H0l2-2V6c0-3 1-6 5-6z" fill="#2f8bf0" />
          <path d="M5 14h4" stroke="#2f8bf0" strokeWidth="2" />
        </svg>
        <svg viewBox="0 0 16 16" className="-mr-[6px] size-4" aria-hidden="true">
          <path d="M1 1h14v11h-2v3l-3-3H1z" fill="#fff" stroke="#2f8bf0" strokeWidth="1.200" />
          <path d="M4 6.500h8" stroke="#2f8bf0" strokeWidth="1.500" strokeDasharray="2 1" />
        </svg>
        <button>我要建议</button>
      </nav>
      <SogouBar />

      <div className="flex h-7 shrink-0 items-center gap-[3px] overflow-hidden whitespace-nowrap">
        <Bar>
          <span className="w-px" />
          <Tool icon="newDoc" />
          <Tool icon="open" />
          <More />
          <Tool icon="save" />
          <Sep />
          <Tool icon="undo" />
          <More />
          <span className="w-[15px]" />
          <Overflow />
        </Bar>
        <Bar>
          <span className="w-[2px]" />
          <Tool icon="define" label="定义" />
          <Tool icon="sigma" label="汇总计算" />
          <Tool icon="cloud" label="云检查" />
          <Tool icon="alignTop" label="平齐板顶" off />
          <Tool icon="find" label="查找图元" />
          <Tool icon="glasses" label="查看钢筋量" />
          <Tool icon="batch" label="批量选择" />
          <span className="w-[35px]" />
          <Overflow />
        </Bar>
        <Bar grow>
          <span className="flex bg-white">
            <Tool icon="cube" label="三维" />
            <More />
          </span>
          <Tool icon="topView" label="俯视" />
          <More />
          <Tool icon="orbit" label="动态观察" />
          <Tool icon="part3d" label="局部三维" off />
          <Sep />
          <Tool icon="full" label="全屏" />
          <Tool icon="zoom" label="缩放" />
          <More />
          <Tool icon="pan" label="平移" />
          <More />
          <Tool icon="screenRotate" label="屏幕旋转" tight />
          <Sep />
          <Tool icon="floors" label="选择楼层" />
          <span className="flex-1" />
          <Overflow />
        </Bar>
      </div>

      <div className="flex min-h-0 flex-1">
        <Sidebar />
        <div className="ml-1 flex min-w-0 flex-1 flex-col">
          <Toolbars />
          <Viewport />
          <BottomTools />
        </div>
      </div>

      <div className="flex h-[22px] shrink-0 gap-[2px] border-t-2 border-white">
        <StatusCell width="w-[148px]"><Mono>X=152322 Y=3972</Mono></StatusCell>
        <StatusCell width="w-[78px]">层高<Mono>:4.5m</Mono></StatusCell>
        <StatusCell width="w-[98px]">底标高<Mono>:4.45m</Mono></StatusCell>
        <StatusCell width="w-12"><Mono>1(1)</Mono></StatusCell>
        <StatusCell width="flex-1">按鼠标左键指定第一个角点，或拾取构件图元</StatusCell>
        <StatusCell width="w-[70px]"><Mono>325.4 FPS</Mono></StatusCell>
      </div>
      <Taskbar />
    </div>
  )
}
